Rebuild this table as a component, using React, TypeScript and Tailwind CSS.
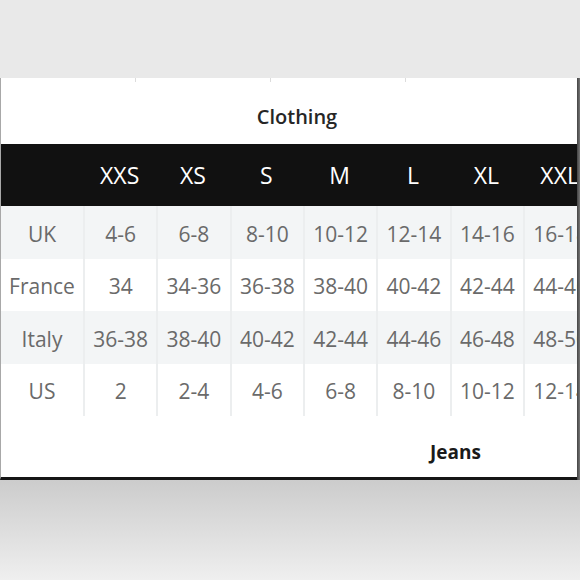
import React from 'react';

const sizes = ['XXS', 'XS', 'S', 'M', 'L', 'XL', 'XXL'];

const rows: { label: string; values: string[] }[] = [
  { label: 'UK', values: ['4-6', '6-8', '8-10', '10-12', '12-14', '14-16', '16-18'] },
  { label: 'France', values: ['34', '34-36', '36-38', '38-40', '40-42', '42-44', '44-46'] },
  { label: 'Italy', values: ['36-38', '38-40', '40-42', '42-44', '44-46', '46-48', '48-50'] },
  { label: 'US', values: ['2', '2-4', '4-6', '6-8', '8-10', '10-12', '12-14'] },
];

const App: React.FC = () => {
  return (
    <div className="w-[580px] h-[580px] bg-[#e9e9e9] flex flex-col overflow-hidden font-['Open_Sans',sans-serif]">
      <div className="h-[78px] shrink-0" />

      <div className="flex h-[402px] shrink-0">
        {/* Size chart card */}
        <div className="w-[577px] bg-white border-l border-l-[#a8a8a8] border-b-[3px] border-b-[#151515] flex flex-col overflow-hidden">
          {/* faint tick marks along the top edge */}
          <div className="h-[4px] flex">
            <div className="w-[134px]" />
            <div className="w-[135px] border-l border-[#dcdcdc]" />
            <div className="w-[135px] border-l border-[#dcdcdc]" />
            <div className="flex-1 border-l border-[#dcdcdc]" />
          </div>

          <div className="h-[62px] pt-[8px] pl-[16px] flex items-center justify-center text-[20px] font-semibold text-[#262626]">
            Clothing
          </div>

          <div className="grid grid-cols-[82px_repeat(7,73.33px)] h-[62px] bg-[#111] text-white text-[23px]">
            <div />
            {sizes.map(s => (
              <div key={s} className="flex items-center justify-center whitespace-nowrap">
                {s}
              </div>
            ))}
          </div>

          {rows.map((row, i) => (
            <div
              key={row.label}
              className={`grid grid-cols-[82px_repeat(7,73.33px)] h-[52.5px] text-[21px] text-[#6a6a6a] ${i % 2 === 0 ? 'bg-[#f3f5f6]' : 'bg-white'}`}
            >
              <div className="flex items-center justify-center pt-[4px]">{row.label}</div>
              {row.values.map((v, j) => (
                <div key={j} className="flex items-center justify-center pt-[4px] whitespace-nowrap border-l-2 border-[#eceeef]">
                  {v}
                </div>
              ))}
            </div>
          ))}

          <div className="h-[61px] pt-[12px] pl-[429px] flex items-center text-[19px] font-bold text-[#1a1a1a]">
            Jeans
          </div>
        </div>
        <div className="w-[3px] bg-gradient-to-r from-[#444] to-[#777]" />
      </div>

      <div className="flex-1 bg-gradient-to-b from-[#cccccc] to-[#efefef]" />
    </div>
  );
};

export default App;
